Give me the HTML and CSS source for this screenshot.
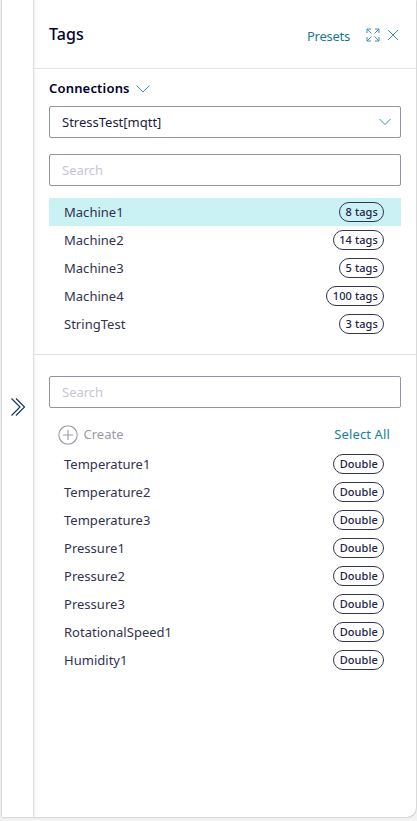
FILE: index.html
```html
<!DOCTYPE html>
<html lang="en">
<head>
<meta charset="utf-8">
<title>Tags</title>
<link rel="stylesheet" href="styles.css">
</head>
<body>
<div class="shell">
  <aside class="rail">
    <svg class="rail-icon" width="16" height="20" viewBox="0 0 16 20"><path d="M1.500 1.500 10 10l-8.500 8.500M6 1.500 14.500 10 6 18.500"/></svg>
  </aside>
  <main class="panel">
    <header class="header">
      <h1 class="title">Tags</h1>
      <a class="link presets">Presets</a>
      <svg class="icon expand" width="14" height="14" viewBox="0 0 14 14"><path d="M5 1H1v4M1 1l4.500 4.500M9 1h4v4M13 1 8.500 5.500M1 9v4h4M1 13l4.500-4.500M13 9v4H9M13 13 8.500 8.500"/></svg>
      <svg class="icon close" width="12" height="12" viewBox="0 0 12 12"><path d="M1 1l10 10M11 1 1 11"/></svg>
    </header>
    <section class="connections">
      <h2 class="subtitle"><span class="subtitle-text">Connections</span>
        <svg class="icon subtitle-icon" width="16" height="10" viewBox="0 0 16 10"><path d="M1.500 1.500 8 8l6.500-6.500"/></svg>
      </h2>
      <div class="field select"><span class="value">StressTest[mqtt]</span>
        <svg class="icon" width="14" height="8" viewBox="0 0 14 8"><path d="M1.500 1 7 6.500 12.500 1"/></svg>
      </div>
      <div class="field"><span class="placeholder">Search</span></div>
      <ul class="list">
        <li class="row selected"><span class="name">Machine1</span><span class="pill">8 tags</span></li>
        <li class="row"><span class="name">Machine2</span><span class="pill">14 tags</span></li>
        <li class="row"><span class="name">Machine3</span><span class="pill">5 tags</span></li>
        <li class="row"><span class="name">Machine4</span><span class="pill">100 tags</span></li>
        <li class="row"><span class="name">StringTest</span><span class="pill">3 tags</span></li>
      </ul>
    </section>
    <section class="tags">
      <div class="field"><span class="placeholder">Search</span></div>
      <div class="actions">
        <svg class="plus" width="20" height="20" viewBox="0 0 20 20"><circle cx="10" cy="10" r="9.200"/><path d="M10 5v10M5 10h10"/></svg>
        <span class="create">Create</span>
        <a class="link select-all">Select All</a>
      </div>
      <ul class="list">
        <li class="row"><span class="name">Temperature1</span><span class="pill">Double</span></li>
        <li class="row"><span class="name">Temperature2</span><span class="pill">Double</span></li>
        <li class="row"><span class="name">Temperature3</span><span class="pill">Double</span></li>
        <li class="row"><span class="name">Pressure1</span><span class="pill">Double</span></li>
        <li class="row"><span class="name">Pressure2</span><span class="pill">Double</span></li>
        <li class="row"><span class="name">Pressure3</span><span class="pill">Double</span></li>
        <li class="row"><span class="name">RotationalSpeed1</span><span class="pill">Double</span></li>
        <li class="row"><span class="name">Humidity1</span><span class="pill">Double</span></li>
      </ul>
    </section>
  </main>
</div>
</body>
</html>
```
FILE: styles.css
```css
* { box-sizing: border-box; }
body {
  margin: 0;
  height: 821px;
  overflow: hidden;
  background: #f3f3f3;
  color: #000028;
  font: 13px/20px "Noto Sans", sans-serif;
}
.shell {
  display: flex;
  width: 414px;
  height: 817px;
  margin-left: 2px;
  background: #fff;
  border-radius: 0 0 9px 0;
  box-shadow: 0 0 2px rgba(0, 0, 0, .4);
}
.rail {
  display: flex;
  width: 31px;
  padding-left: 7.5px;
  padding-top: 397px;
  align-items: flex-start;
}
.rail-icon { fill: none; stroke: #16385f; stroke-width: 1.2; }
.panel {
  width: 383px;
  border-left: 1px solid #dedede;
  box-shadow: inset 2px 0 2px -1px rgba(0, 0, 0, .06);
  border-radius: 0 0 9px 0;
}
.header {
  display: flex;
  align-items: center;
  height: 69px;
  padding: 4px 17px 0 15px;
  border-bottom: 1px solid #e2e2e2;
}
.title { margin: 0; padding-bottom: 5px; font-size: 16px; font-weight: 500; letter-spacing: .05px; }
.link { color: #1c788c; }
.presets { margin-left: auto; letter-spacing: -.25px; }
.icon { display: block; flex: none; fill: none; stroke: #3d92ad; stroke-width: 1; }
.expand { margin-left: 16px; margin-bottom: 2px; }
.close { margin-left: 7px; margin-bottom: 2px; }
.connections {
  height: 286px;
  padding: 9px 15px 0;
  border-bottom: 1px solid #e2e2e2;
}
.subtitle {
  display: flex;
  align-items: center;
  gap: 5px;
  height: 20px;
  margin: 0 0 8px;
  font-size: 13px;
  font-weight: 600;
  letter-spacing: .18px;
}
.subtitle-icon { margin-top: 2px; }
.field {
  display: flex;
  align-items: center;
  justify-content: space-between;
  height: 32px;
  padding: 0 8px 0 12px;
  border: 1px solid #9494a6;
  border-radius: 2px;
}
.select { margin-bottom: 16px; }
.value { color: #1c1c3c; }
.placeholder { color: #c6c6d0; }
.list { margin: 12px 0 0; padding: 0; list-style: none; }
.row {
  display: flex;
  align-items: center;
  justify-content: space-between;
  height: 28px;
  padding: 0 17px 0 15px;
}
.selected { background: #caf1f4; }
.name { color: #32324f; letter-spacing: .02px; }
.pill {
  height: 20px;
  padding: 0 5px 0 5.5px;
  border: 1px solid #333353;
  border-radius: 10px;
  color: #232347;
  font-size: 11px;
  font-weight: 500;
  letter-spacing: .1px;
  line-height: 18px;
}
.tags { padding: 21px 15px 0; }
.actions { display: flex; align-items: center; height: 20px; margin-top: 17px; padding: 0 11px 0 8.5px; }
.plus { fill: none; stroke: #9999a5; stroke-width: 1.1; }
.create, .select-all { padding-bottom: 2px; }
.create { margin-left: 6px; color: #9b9ba3; }
.select-all { margin-left: auto; color: #168399; letter-spacing: .12px; }
.tags .list { margin-top: 5px; }
```
